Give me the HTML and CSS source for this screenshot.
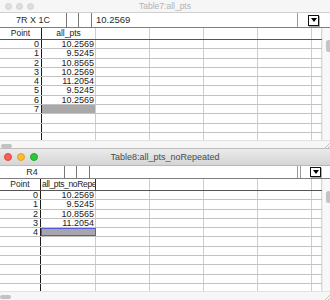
FILE: index.html
```html
<!DOCTYPE html>
<html lang="en">
<head>
    <meta charset="UTF-8">
    <meta name="viewport" content="width=device-width, initial-scale=1.0">
    <link rel="stylesheet" href="styles.css">
</head>
<body>
    <div class="win win1 inactive">
        <div class="titlebar">
            <div class="lights"><span></span><span></span><span></span></div>
            <div class="title">Table7:all_pts</div>
        </div>
        <div class="entry">
            <div class="entry-name">7R X 1C</div>
            <div class="entry-box"></div>
            <div class="entry-box"></div>
            <div class="entry-value">10.2569</div>
            <div class="entry-sep"></div>
            <div class="entry-menu"><span class="menu-btn"></span></div>
        </div>
        <div class="sheet">
            <div class="grid" id="grid1">
                <div class="row head">
                    <div class="cell c0 center">Point</div>
                    <div class="cell c1 center">all_pts</div>
                    <div class="cell"></div><div class="cell"></div><div class="cell"></div><div class="cell"></div>
                    <div class="cell last"></div>
                </div>
            </div>
            <div class="vscroll"><span class="vthumb"></span></div>
        </div>
        <div class="hscroll">
            <span class="hthumb"></span>
            <svg class="grip" width="6" height="6" viewBox="0 0 6 6"><path d="M6 1L1 6M6 4L4 6" stroke="#b4b4b4" stroke-width="0.8"/></svg>
        </div>
    </div>

    <div class="win win2">
        <div class="titlebar">
            <div class="lights"><span class="red"></span><span class="yellow"></span><span class="green"></span></div>
            <div class="title">Table8:all_pts_noRepeated</div>
        </div>
        <div class="entry">
            <div class="entry-name">R4</div>
            <div class="entry-box"></div>
            <div class="entry-box"></div>
            <div class="entry-value"></div>
            <div class="entry-sep double"></div>
            <div class="entry-menu"><span class="menu-btn"></span></div>
        </div>
        <div class="sheet">
            <div class="grid" id="grid2">
                <div class="row head">
                    <div class="cell c0 center">Point</div>
                    <div class="cell c1 boxed">all_pts_noRepeated</div>
                    <div class="cell"></div><div class="cell"></div><div class="cell"></div><div class="cell"></div>
                    <div class="cell last"></div>
                </div>
            </div>
            <div class="vscroll"><span class="vthumb"></span></div>
        </div>
        <div class="hscroll">
            <span class="hthumb"></span>
            <svg class="grip" width="6" height="6" viewBox="0 0 6 6"><path d="M6 1L1 6M6 4L4 6" stroke="#b4b4b4" stroke-width="0.8"/></svg>
        </div>
    </div>

    <script>
        // Table data: values of the one wave, the rest stays empty
        const tables = {
            grid1: { values: ['10.2569', '9.5245', '10.8565', '10.2569', '11.2054', '9.5245', '10.2569'], selected: false },
            grid2: { values: ['10.2569', '9.5245', '10.8565', '11.2054'], selected: true }
        };
        const rowCount = 11;

        Object.keys(tables).forEach(function(id) {
            const grid = document.getElementById(id);
            const data = tables[id];
            for (let i = 0; i < rowCount; i++) {
                const row = document.createElement('div');
                row.className = 'row';
                let html = '<div class="cell c0 num">' + (i <= data.values.length ? i : '') + '</div>';
                if (i < data.values.length) {
                    html += '<div class="cell c1 num">' + data.values[i] + '</div>';
                } else if (i === data.values.length) {
                    html += '<div class="cell c1 blank' + (data.selected ? ' sel' : '') + '"></div>';
                } else {
                    html += '<div class="cell c1"></div>';
                }
                html += '<div class="cell"></div><div class="cell"></div><div class="cell"></div><div class="cell"></div><div class="cell last"></div>';
                row.innerHTML = html;
                grid.appendChild(row);
            }
        });
    </script>
</body>
</html>
```

FILE: styles.css
```css
* {
    box-sizing: border-box;
}
body {
    margin: 0;
    width: 330px;
    height: 300px;
    overflow: hidden;
    background: #bdbdbd;
    font-family: "Liberation Sans", Arial, sans-serif;
    font-size: 9px;
    color: #222;
}
.win {
    display: flex;
    flex-direction: column;
    background: #fff;
    overflow: hidden;
}
.win1 {
    height: 148px;
}
.win2 {
    height: 151px;
    margin-top: 1px;
}

/* title bar */
.titlebar {
    display: grid;
    grid-template-columns: 1fr auto 1fr;
    align-items: center;
    border-bottom: 1px solid #cfcfcf;
    background: linear-gradient(#ebebeb, #d5d5d5);
}
.win1 .titlebar {
    height: 13px;
    background: #f6f6f6;
}
.win2 .titlebar {
    height: 17px;
    border-bottom-color: #b9b9b9;
}
.lights {
    display: flex;
}
.win1 .lights {
    gap: 4px;
    padding-left: 5px;
}
.win2 .lights {
    gap: 5px;
    padding-left: 4px;
}
.lights span {
    display: block;
    border-radius: 50%;
}
.win1 .lights span {
    width: 7px;
    height: 7px;
    background: #dedede;
    border: 1px solid #d2d2d2;
}
.win2 .lights span {
    width: 8px;
    height: 8px;
}
.lights .red {
    background: #fc5f57;
    border: 1px solid #e2463f;
}
.lights .yellow {
    background: #fdbc2e;
    border: 1px solid #e0a028;
}
.lights .green {
    background: #2ac840;
    border: 1px solid #1eab2f;
}
.title {
    font-size: 8.5px;
    white-space: nowrap;
}
.win1 .title {
    color: #b3b3b3;
    margin-top: -1px;
}
.win2 .title {
    color: #4b4b4b;
    font-size: 9px;
}

/* entry line */
.entry {
    display: flex;
    border-bottom: 1px solid #7d7d7d;
    color: #2a2a2a;
}
.win1 .entry {
    height: 15px;
}
.win2 .entry {
    height: 13px;
}
.entry-name {
    width: 67px;
    border-right: 1px solid #777;
    text-align: center;
    line-height: 14px;
}
.win2 .entry-name {
    width: 65px;
    line-height: 12px;
}
.entry-box {
    width: 12px;
    border-right: 1px solid #777;
}
.entry-box + .entry-box {
    width: 13px;
}
.entry-value {
    flex: 1;
    padding-left: 4px;
    line-height: 14px;
    font-size: 9.5px;
}
.entry-sep {
    width: 2px;
    border-left: 1px solid #9a9a9a;
}
.entry-sep.double {
    width: 4px;
    border-right: 1px solid #9a9a9a;
}
.entry-menu {
    width: 31px;
    display: flex;
    align-items: center;
    padding-left: 9px;
}
.win2 .entry-menu {
    width: 29px;
}
.menu-btn {
    width: 11px;
    height: 11px;
    border: 1px solid #111;
    box-shadow: 1px 1px 0 #aaa;
    display: flex;
    align-items: center;
    justify-content: center;
}
.win2 .menu-btn {
    height: 10px;
}
.menu-btn::after {
    content: "";
    border-left: 3.5px solid transparent;
    border-right: 3.5px solid transparent;
    border-top: 4px solid #000;
}

/* sheet */
.sheet {
    flex: 1;
    display: flex;
    overflow: hidden;
}
.grid {
    width: 322px;
    overflow: hidden;
}
.row {
    display: flex;
    height: 9.3px;
    line-height: 9.3px;
    border-bottom: 1px solid #c2c2c2;
}
.row.head {
    height: 12px;
    line-height: 11px;
    font-size: 8.5px;
    border-bottom: 1px solid #555;
}
.cell {
    width: 54px;
    border-right: 1px solid #cdcdcd;
    white-space: nowrap;
    overflow: hidden;
}
.cell.c0 {
    width: 42px;
    border-right-color: #1c1c1c;
}
.win2 .cell.c0 {
    width: 41px;
}
.win2 .cell.c1 {
    width: 55px;
}
.cell.last {
    width: 10px;
    border-right-color: #dadada;
}
.center {
    text-align: center;
}
.num {
    text-align: right;
    padding-right: 1px;
}
.c0.num {
    padding-right: 2px;
}
.boxed {
    border-right-color: #333;
    padding-left: 1px;
    letter-spacing: -0.35px;
}
.blank {
    background: #a9a9a9;
}
.blank.sel {
    border: 1px solid #5757d9;
    background: #a6a6ac;
}
.vscroll {
    width: 8px;
    background: #f8f8f8;
    border-left: 1px solid #ececec;
    padding-top: 12px;
    padding-left: 3px;
}
.vthumb {
    display: block;
    width: 5px;
    height: 12px;
    border-radius: 3px;
    background: #c3c3c3;
}

/* bottom scroller */
.hscroll {
    display: flex;
    align-items: center;
    justify-content: space-between;
    background: #f6f6f6;
    border-top: 1px solid #e2e2e2;
    padding-left: 1px;
}
.win1 .hscroll {
    height: 8px;
}
.win2 .hscroll {
    height: 9px;
    padding-left: 0;
}
.hthumb {
    width: 11px;
    height: 4px;
    border-radius: 2px;
    background: #c2c2c2;
    margin-top: 2px;
}
.grip {
    align-self: flex-end;
}
```
